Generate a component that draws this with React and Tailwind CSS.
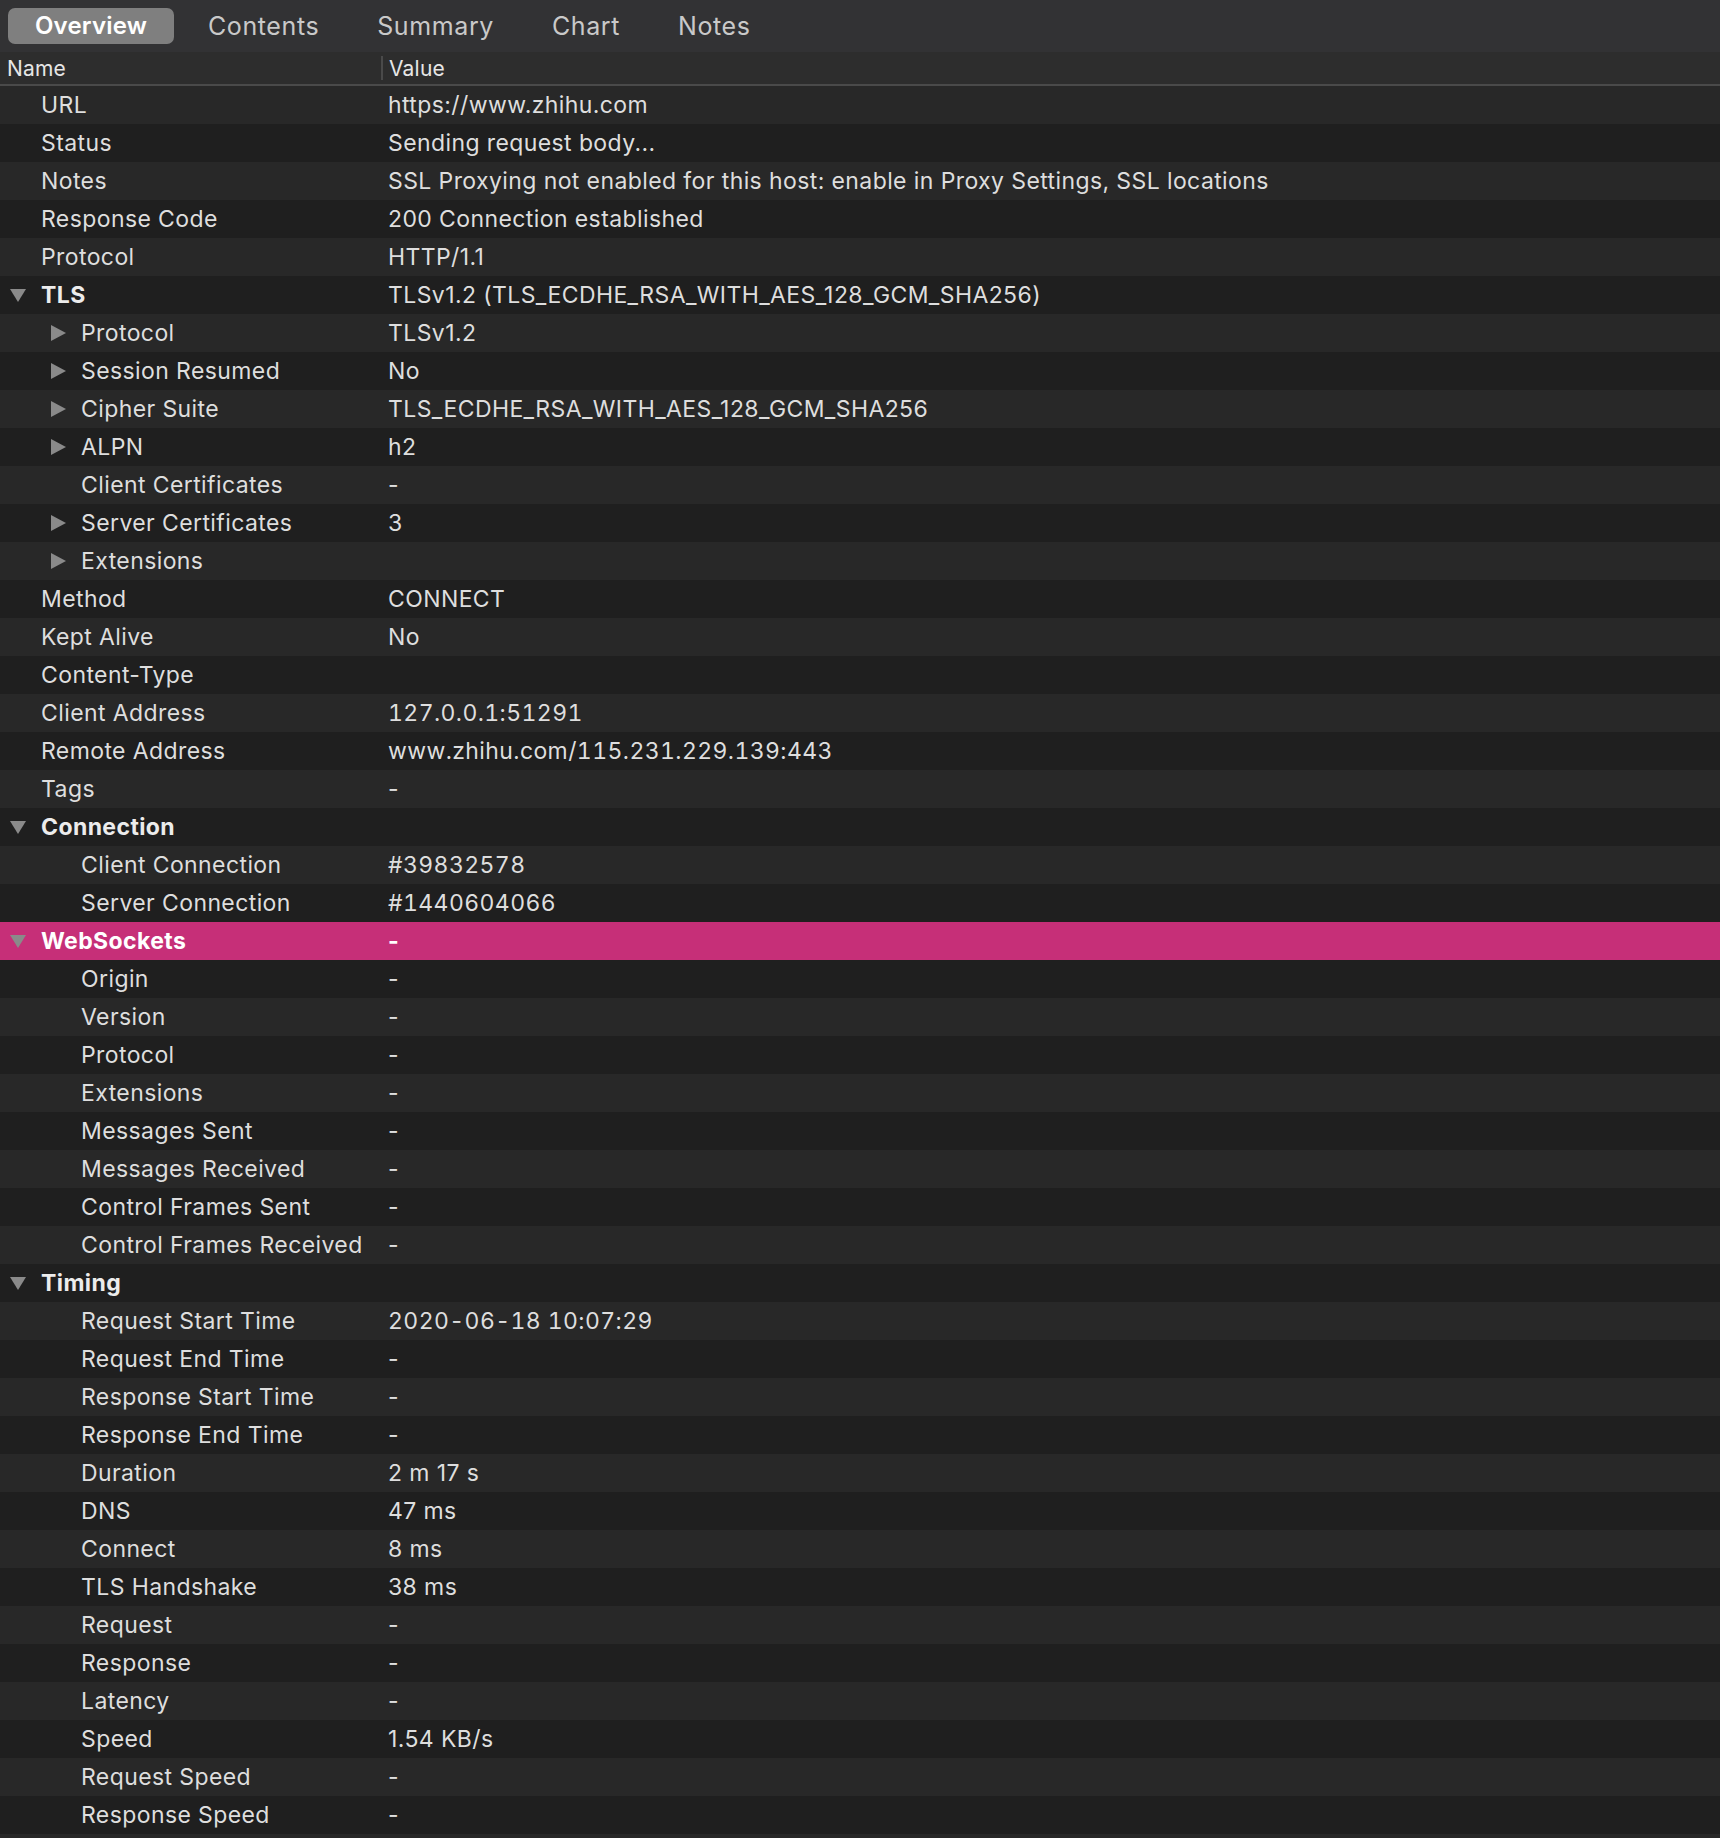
import React from "react";

const rows = [
  { n: "URL", v: "https://www.zhihu.com" },
  { n: "Status", v: "Sending request body..." },
  { n: "Notes", v: "SSL Proxying not enabled for this host: enable in Proxy Settings, SSL locations" },
  { n: "Response Code", v: "200 Connection established" },
  { n: "Protocol", v: "HTTP/1.1" },
  { n: "TLS", v: "TLSv1.2 (TLS_ECDHE_RSA_WITH_AES_128_GCM_SHA256)", sec: true },
  { n: "Protocol", v: "TLSv1.2", d: 1, arrow: true },
  { n: "Session Resumed", v: "No", d: 1, arrow: true },
  { n: "Cipher Suite", v: "TLS_ECDHE_RSA_WITH_AES_128_GCM_SHA256", d: 1, arrow: true },
  { n: "ALPN", v: "h2", d: 1, arrow: true },
  { n: "Client Certificates", v: "-", d: 1 },
  { n: "Server Certificates", v: "3", d: 1, arrow: true },
  { n: "Extensions", v: "", d: 1, arrow: true },
  { n: "Method", v: "CONNECT" },
  { n: "Kept Alive", v: "No" },
  { n: "Content-Type", v: "" },
  { n: "Client Address", v: "127.0.0.1:51291", num: true },
  { n: "Remote Address", v: "www.zhihu.com/115.231.229.139:443", num: true },
  { n: "Tags", v: "-" },
  { n: "Connection", v: "", sec: true },
  { n: "Client Connection", v: "#39832578", d: 1, num: true },
  { n: "Server Connection", v: "#1440604066", d: 1, num: true },
  { n: "WebSockets", v: "-", sec: true, sel: true },
  { n: "Origin", v: "-", d: 1 },
  { n: "Version", v: "-", d: 1 },
  { n: "Protocol", v: "-", d: 1 },
  { n: "Extensions", v: "-", d: 1 },
  { n: "Messages Sent", v: "-", d: 1 },
  { n: "Messages Received", v: "-", d: 1 },
  { n: "Control Frames Sent", v: "-", d: 1 },
  { n: "Control Frames Received", v: "-", d: 1 },
  { n: "Timing", v: "", sec: true },
  { n: "Request Start Time", v: "2020-06-18 10:07:29", d: 1, num: true },
  { n: "Request End Time", v: "-", d: 1 },
  { n: "Response Start Time", v: "-", d: 1 },
  { n: "Response End Time", v: "-", d: 1 },
  { n: "Duration", v: "2 m 17 s", d: 1 },
  { n: "DNS", v: "47 ms", d: 1 },
  { n: "Connect", v: "8 ms", d: 1 },
  { n: "TLS Handshake", v: "38 ms", d: 1 },
  { n: "Request", v: "-", d: 1 },
  { n: "Response", v: "-", d: 1 },
  { n: "Latency", v: "-", d: 1 },
  { n: "Speed", v: "1.54 KB/s", d: 1 },
  { n: "Request Speed", v: "-", d: 1 },
  { n: "Response Speed", v: "-", d: 1 },
  { n: "", v: "" },
];

function DownTri() {
  return (
    <svg width="16" height="13" viewBox="0 0 16 13">
      <polygon points="0,0 16,0 8,13" fill="#8a8a8a" />
    </svg>
  );
}

function RightTri() {
  return (
    <svg width="15" height="16" viewBox="0 0 15 16">
      <polygon points="0,0 15,8 0,16" fill="#8a8a8a" />
    </svg>
  );
}

function Row({ r, i }) {
  const bg = r.sel ? "bg-[#c62f78]" : i % 2 === 0 ? "bg-[#282828]" : "bg-[#1f1f1f]";
  const nameCls = r.sec
    ? r.sel
      ? "font-bold text-white"
      : "font-bold text-[#ececec]"
    : "text-[#dedede]";
  return (
    <div className={"flex h-[38px] shrink-0 items-center " + bg}>
      <div className={"flex w-[381px] shrink-0 items-center " + (r.d === 1 ? "pl-[51px]" : "pl-[10px]")}>
        <div className={"flex shrink-0 items-center " + (r.d === 1 ? "w-[30px]" : "w-[31px]")}>
          {r.sec ? <DownTri /> : r.arrow ? <RightTri /> : null}
        </div>
        <span className={"whitespace-nowrap leading-none " + nameCls}>{r.n}</span>
      </div>
      <div
        className={
          "whitespace-nowrap pl-[7px] leading-none " +
          (r.sel ? "font-bold text-white" : "text-[#dedede]") +
          (r.num ? " tabular-nums" : "")
        }
      >
        {r.v}
      </div>
    </div>
  );
}

export default function App() {
  const tabs = ["Overview", "Contents", "Summary", "Chart", "Notes"];
  return (
    <div
      className="flex h-[1838px] w-[1720px] flex-col overflow-hidden bg-[#1f1f1f] text-[23px] tracking-[0.4px]"
      style={{ fontFamily: "Inter, 'Noto Sans', 'Liberation Sans', sans-serif" }}
    >
      <div className="flex h-[52px] shrink-0 items-center bg-[#323234] px-[8px]">
        {tabs.map((t, i) =>
          i === 0 ? (
            <div
              key={t}
              className="mr-[5px] flex h-[36px] w-[166px] items-center justify-center rounded-[7px] bg-[#7f7f7f] text-[24px] font-semibold leading-none tracking-[0.2px] text-white"
            >
              {t}
            </div>
          ) : (
            <div
              key={t}
              className="flex h-[36px] items-center px-[29px] text-[25px] leading-none tracking-[0.6px] text-[#c9c9c9]"
            >
              {t}
            </div>
          )
        )}
      </div>
      <div className="flex h-[32px] shrink-0 items-center bg-[#2d2d2d] text-[21px] tracking-[0.2px] text-[#e6e6e6]">
        <div className="w-[381px] shrink-0 pl-[7px] leading-none">Name</div>
        <div className="h-[24px] w-[2px] shrink-0 bg-[#4a4a4a]" />
        <div className="pl-[6px] leading-none">Value</div>
      </div>
      <div className="h-[2px] shrink-0 bg-[#4a4a4a]" />
      {rows.map((r, i) => (
        <Row key={i} r={r} i={i} />
      ))}
    </div>
  );
}
